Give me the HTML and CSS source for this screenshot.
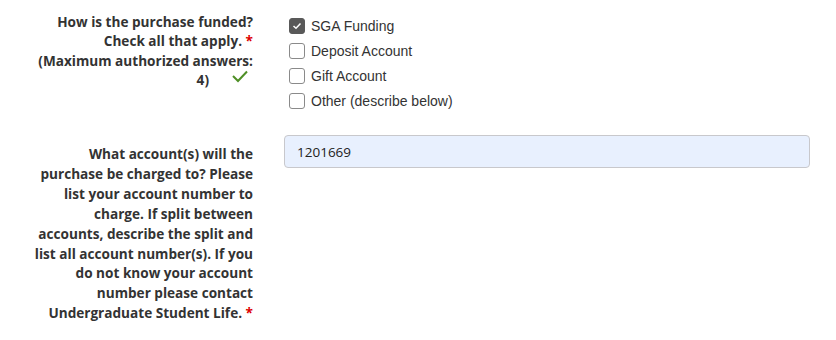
FILE: index.html
```html
<!DOCTYPE html>
<html>
<head>
<meta charset="utf-8">
<link rel="stylesheet" href="styles.css">
</head>
<body>
<form class="form">
  <div class="row row-funding">
    <div class="label">How is the purchase funded?<br>Check all that apply. <span class="req">*</span><br>(Maximum authorized answers:<br>4)<span class="valid"><svg width="16" height="14" viewBox="0 0 16 14"><path d="M1 6 L6 11 L15 1.5" fill="none" stroke="#4f8f26" stroke-width="2"/></svg></span></div>
    <div class="options">
      <label class="opt"><span class="box checked"><svg width="10" height="8" viewBox="0 0 10 8"><path d="M1.5 4 L4 6.3 L8.5 1.5" fill="none" stroke="#fff" stroke-width="1.5"/></svg></span>SGA Funding</label>
      <label class="opt"><span class="box"></span>Deposit Account</label>
      <label class="opt"><span class="box"></span>Gift Account</label>
      <label class="opt"><span class="box"></span>Other (describe below)</label>
    </div>
  </div>
  <div class="row row-account">
    <div class="label">What account(s) will the<br>purchase be charged to? Please<br>list your account number to<br>charge. If split between<br>accounts, describe the split and<br>list all account number(s). If you<br>do not know your account<br>number please contact<br>Undergraduate Student Life. <span class="req">*</span></div>
    <div class="field"><div class="input">1201669</div></div>
  </div>
</form>
</body>
</html>
```
FILE: styles.css
```css
html, body { margin: 0; padding: 0; background: #fff; }
body { width: 836px; height: 340px; overflow: hidden; font-family: "Open Sans", "Liberation Sans", sans-serif; }
.form { padding: 12px 26px 0 0; }
.row { display: grid; grid-template-columns: 253px 1fr; column-gap: 31px; }
.label {
  text-align: right;
  font-weight: 700;
  font-size: 13.6px;
  line-height: 19.4px;
  color: #333;
  white-space: nowrap;
}
.req { color: #d00; }
.valid { display: inline-block; width: 44px; position: relative; height: 14px; vertical-align: -1px; }
.valid svg { position: absolute; left: 23px; top: -2px; }
.options { display: flex; flex-direction: column; padding-top: 1px; }
.opt {
  display: flex; align-items: center; height: 25px;
  font-family: "Liberation Sans", Arial, sans-serif; font-size: 14px; color: #333;
  margin-left: 5px;
}
.box {
  width: 16px; height: 16px; box-sizing: border-box;
  border: 1px solid #8a8a8a; border-radius: 3px; background: #fff;
  margin-right: 6px; display: flex; align-items: center; justify-content: center;
}
.box.checked { background: #595959; border-color: #595959; }
.row-account { margin-top: 22px; }
.row-account .label { padding-top: 9px; line-height: 19.9px; }
.input {
  height: 33px; box-sizing: border-box;
  background: #e8f0fe; border: 1px solid #c8c8cc; border-radius: 4px;
  padding: 0 12px; display: flex; align-items: center;
  font-family: "Open Sans", sans-serif; font-size: 13.5px; color: #222;
}
```
